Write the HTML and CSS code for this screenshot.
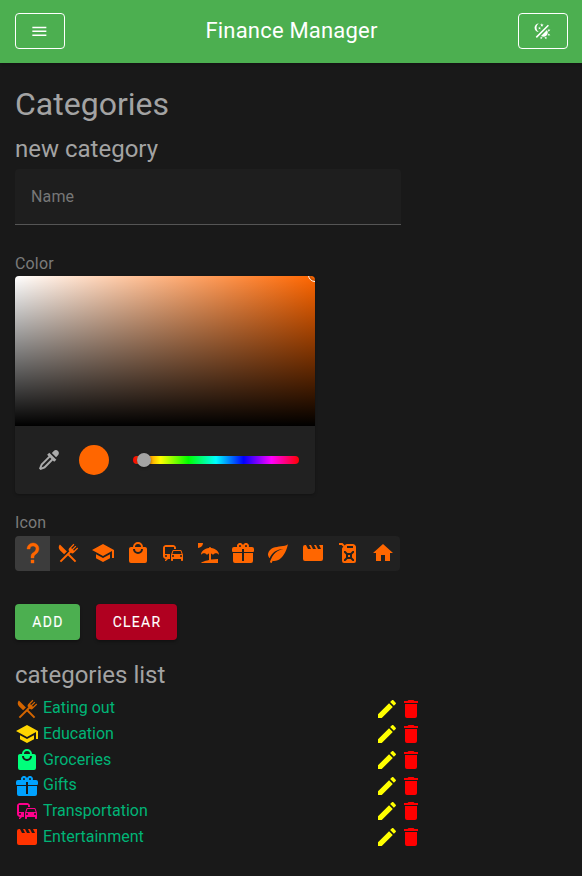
FILE: index.html
```html
<!DOCTYPE html>
<html lang="en">
<head>
<meta charset="utf-8">
<title>Finance Manager</title>
<link rel="stylesheet" href="styles.css">
</head>
<body>
<svg class="sprite" aria-hidden="true">
<symbol id="silverware" viewBox="0 0 24 24"><path d="M8.1,13.34L3.91,9.16C2.35,7.59 2.35,5.06 3.91,3.5L10.93,10.5L8.1,13.34M13.41,13L20.29,19.88L18.88,21.29L12,14.41L5.12,21.29L3.71,19.88L13.36,10.22L13.16,10C12.38,9.23 12.38,7.97 13.16,7.19L17.5,2.82L18.43,3.74L15.19,7L16.15,7.94L19.39,4.69L20.31,5.61L17.06,8.85L18,9.81L21.26,6.56L22.18,7.5L17.81,11.84C17.03,12.62 15.77,12.62 15,11.84L14.78,11.64L13.41,13Z"/></symbol>
<symbol id="school" viewBox="0 0 24 24"><path d="M12,3L1,9L12,15L21,10.09V17H23V9M5,13.18V17.18L12,21L19,17.18V13.18L12,17L5,13.18Z"/></symbol>
<symbol id="shopping" viewBox="0 0 24 24"><path d="M12,13A5,5 0 0,1 7,8H9A3,3 0 0,0 12,11A3,3 0 0,0 15,8H17A5,5 0 0,1 12,13M12,3A3,3 0 0,1 15,6H9A3,3 0 0,1 12,3M19,6H17A5,5 0 0,0 12,1A5,5 0 0,0 7,6H5C3.89,6 3,6.89 3,8V20A2,2 0 0,0 5,22H19A2,2 0 0,0 21,20V8C21,6.89 20.1,6 19,6Z"/></symbol>
<symbol id="commute" viewBox="0 0 24 24"><path fill-rule="evenodd" d="M12 4H5C3.34 4 2 5.34 2 7v8c0 1.66 1.34 3 3 3l-1 1v1h1l2-2h2v-5H4V6h9v2h2V7c0-1.66-1.34-3-3-3zM5 14a1 1 0 1 1 0 2 1 1 0 0 1 0-2zM20.57 9.66c-.14-.4-.52-.66-.97-.66h-7.19c-.46 0-.83.26-.98.66L10 13.77l.01 5.51c0 .38.31.72.69.72h.62c.38 0 .68-.38.68-.76V18h8v1.24c0 .38.31.76.69.76h.61c.38 0 .69-.34.69-.72l.01-1.37v-4.14l-1.43-4.11zM12.41 10h7.19l1.03 3h-9.25l1.03-3zM12 16a1 1 0 1 1 0-2 1 1 0 0 1 0 2zM20 16a1 1 0 1 1 0-2 1 1 0 0 1 0 2z"/></symbol>
<symbol id="beach" viewBox="0 0 24 24"><path d="M15,18.54C17.13,18.21 19.5,18 22,18V22H5C5,21.35 8.2,19.86 13,18.9V12.4C12.16,12.65 11.45,13.21 11,13.95C10.39,12.93 9.27,12.25 8,12.25C6.73,12.25 5.61,12.93 5,13.95C5.03,10.37 8.5,7.43 13,7.04V7A1,1 0 0,1 14,6A1,1 0 0,1 15,7V7.04C19.5,7.43 22.96,10.37 23,13.95C22.39,12.93 21.27,12.25 20,12.25C18.73,12.25 17.61,12.93 17,13.95C16.55,13.21 15.84,12.65 15,12.39V18.54M7,2A5,5 0 0,1 2,7V2H7Z"/></symbol>
<symbol id="gift" viewBox="0 0 24 24"><path d="M9.06,1.93C7.17,1.92 5.33,3.74 6.17,6H3A2,2 0 0,0 1,8V10A1,1 0 0,0 2,11H11V8H13V11H22A1,1 0 0,0 23,10V8A2,2 0 0,0 21,6H17.83C19,2.73 14.6,0.42 12.57,3.24L12,4L11.43,3.22C10.8,2.33 9.93,1.94 9.06,1.93M9,4C9.89,4 10.34,5.08 9.71,5.71C9.08,6.34 8,5.89 8,5A1,1 0 0,1 9,4M15,4C15.89,4 16.34,5.08 15.71,5.71C15.08,6.34 14,5.89 14,5A1,1 0 0,1 15,4M2,12V20A2,2 0 0,0 4,22H20A2,2 0 0,0 22,20V12H13V20H11V12H2Z"/></symbol>
<symbol id="movie" viewBox="0 0 24 24"><path d="M18,4L20,8H17L15,4H13L15,8H12L10,4H8L10,8H7L5,4H4A2,2 0 0,0 2,6V18A2,2 0 0,0 4,20H20A2,2 0 0,0 22,18V4H18Z"/></symbol>
<symbol id="pencil" viewBox="0 0 24 24"><path d="M20.71,7.04C21.1,6.65 21.1,6 20.71,5.63L18.37,3.29C18,2.9 17.35,2.9 16.96,3.29L15.12,5.12L18.87,8.87M3,17.25V21H6.75L17.81,9.93L14.06,6.18L3,17.25Z"/></symbol>
<symbol id="delete" viewBox="0 0 24 24"><path d="M19,4H15.5L14.5,3H9.5L8.5,4H5V6H19M6,19A2,2 0 0,0 8,21H16A2,2 0 0,0 18,19V7H6V19Z"/></symbol>
</svg>
<header class="bar">
<button class="outlined"><svg viewBox="0 0 24 24"><path d="M3,6H21V8H3V6M3,11H21V13H3V11M3,16H21V18H3V16Z"/></svg></button>
<div class="title">Finance Manager</div>
<button class="outlined"><svg viewBox="0 0 24 24"><path d="M7.5,2C5.71,3.15 4.5,5.18 4.5,7.5C4.5,9.82 5.71,11.85 7.53,13C4.46,13 2,10.54 2,7.5A5.5,5.5 0 0,1 7.5,2M19.07,3.5L20.5,4.93L4.93,20.5L3.5,19.07L19.07,3.5M12.89,5.93L11.41,5L9.97,6L10.39,4.3L9,3.24L10.75,3.12L11.33,1.47L12,3.1L13.73,3.13L12.38,4.26L12.89,5.93M9.59,9.54L8.43,8.81L7.31,9.59L7.65,8.27L6.56,7.44L7.92,7.35L8.37,6.06L8.88,7.33L10.24,7.36L9.19,8.23L9.59,9.54M19,13.5A5.5,5.5 0 0,1 13.5,19C12.28,19 11.15,18.6 10.24,17.93L17.93,10.24C18.6,11.15 19,12.28 19,13.5M14.6,20.08L17.37,18.93L17.13,22.28L14.6,20.08M18.93,17.38L20.08,14.61L22.28,17.15L18.93,17.38M20.08,12.42L18.94,9.64L22.28,9.88L20.08,12.42M9.63,18.93L12.4,20.08L9.87,22.27L9.63,18.93Z"/></svg></button>
</header>
<main>
<h1>Categories</h1>
<h2>new category</h2>
<div class="field">Name</div>
<div class="label color-label">Color</div>
<div class="picker">
<div class="canvas"><i class="dot"></i></div>
<div class="controls">
<svg class="dropper" viewBox="0 0 24 24"><path d="M19.35,11.72L17.22,13.85L15.81,12.43L8.1,20.14L3.5,22L2,20.5L3.86,15.9L11.57,8.19L10.15,6.78L12.28,4.65L19.35,11.72M16.76,3C17.93,1.83 19.83,1.83 21,3C22.17,4.17 22.17,6.07 21,7.24L19.08,9.16L14.84,4.92L16.76,3M5.56,17.03L4.5,19.5L6.97,18.44L14.4,11L13,9.6L5.56,17.03Z"/></svg>
<div class="swatch"></div>
<div class="hue"><i class="thumb"></i></div>
</div>
</div>
<div class="label icon-label">Icon</div>
<div class="icons">
<span class="selected"><svg viewBox="0 0 24 24"><path d="M10,19H13V22H10V19M12,2C17.35,2.22 19.68,7.62 16.5,11.67C15.67,12.67 14.33,13.33 13.67,14.17C13,15 13,16 13,17H10C10,15.33 10,13.92 10.67,12.92C11.33,11.92 12.67,11.33 13.5,10.67C15.92,8.43 15.32,5.26 12,5A3,3 0 0,0 9,8H6A6,6 0 0,1 12,2Z"/></svg></span>
<span><svg><use href="#silverware"/></svg></span>
<span><svg><use href="#school"/></svg></span>
<span><svg><use href="#shopping"/></svg></span>
<span><svg><use href="#commute"/></svg></span>
<span><svg><use href="#beach"/></svg></span>
<span><svg><use href="#gift"/></svg></span>
<span><svg viewBox="0 0 24 24"><path d="M17,8C8,10 5.9,16.17 3.82,21.34L5.71,22L6.66,19.7C7.14,19.87 7.64,20 8,20C19,20 22,3 22,3C21,5 14,5.25 9,6.25C4,7.25 2,11.5 2,13.5C2,15.5 3.75,17.25 3.75,17.25C7,8 17,8 17,8Z"/></svg></span>
<span><svg><use href="#movie"/></svg></span>
<span><svg viewBox="0 0 24 24"><path fill-rule="evenodd" d="M3,2H6C6.28,2 6.53,2.11 6.71,2.29L8.79,4.38L9.59,3.59C10,3.2 10.5,3 11,3H17C17.5,3 18,3.2 18.41,3.59L19.41,4.59C19.8,5 20,5.5 20,6V20A2,2 0 0,1 18,22H8A2,2 0 0,1 6,20V8C6,7.5 6.2,7 6.59,6.59L7.38,5.79L5.59,4H3V2M11,5V7H17V5H11M11.41,12L9.41,10H8V11.41L10,13.41V16.59L8,18.59V20H9.41L11.41,18H14.59L16.59,20H18V18.59L16,16.59V13.41L18,11.41V10H16.59L14.59,12H11.41M12,14H14V16H12V14Z"/></svg></span>
<span><svg viewBox="0 0 24 24"><path d="M10,20V14H14V20H19V12H22L12,3L2,12H5V20H10Z"/></svg></span>
</div>
<div class="actions"><button class="add">ADD</button><button class="clear">CLEAR</button></div>
<h2 class="list-title">categories list</h2>
<ul class="list">
<li><svg class="c-eating"><use href="#silverware"/></svg><span>Eating out</span><svg class="edit"><use href="#pencil"/></svg><svg class="del"><use href="#delete"/></svg></li>
<li><svg class="c-education"><use href="#school"/></svg><span>Education</span><svg class="edit"><use href="#pencil"/></svg><svg class="del"><use href="#delete"/></svg></li>
<li><svg class="c-groceries"><use href="#shopping"/></svg><span>Groceries</span><svg class="edit"><use href="#pencil"/></svg><svg class="del"><use href="#delete"/></svg></li>
<li><svg class="c-gifts"><use href="#gift"/></svg><span>Gifts</span><svg class="edit"><use href="#pencil"/></svg><svg class="del"><use href="#delete"/></svg></li>
<li><svg class="c-transport"><use href="#commute"/></svg><span>Transportation</span><svg class="edit"><use href="#pencil"/></svg><svg class="del"><use href="#delete"/></svg></li>
<li><svg class="c-fun"><use href="#movie"/></svg><span>Entertainment</span><svg class="edit"><use href="#pencil"/></svg><svg class="del"><use href="#delete"/></svg></li>
</ul>
</main>
</body>
</html>
```
FILE: styles.css
```css
* { box-sizing: border-box; }
body { margin: 0; height: 876px; overflow: hidden; background: #191919; color: #a3a3a3; font: 16px/24px Roboto, sans-serif; }
svg { width: 24px; height: 24px; fill: currentColor; flex: none; display: block; }
.sprite { display: none; }
button { font: 400 14px/36px Roboto, sans-serif; padding: 0; border: 0; border-radius: 4px; }
.bar { height: 63px; padding: 0 14px 1px 15px; background: #4caf50; color: #fff; display: flex; align-items: center; justify-content: space-between; box-shadow: 0 2px 4px rgba(0,0,0,.25); }
.outlined { width: 50px; height: 36px; border: 1px solid #fff; background: none; color: #fff; display: flex; align-items: center; justify-content: center; }
.outlined svg { width: 18.7px; height: 18.7px; margin-right: 1px; }
.title { font-size: 22px; line-height: 28px; padding-bottom: 1px; letter-spacing: .2px; }
main { padding: 21px 15px 0; }
h1, h2 { margin: 0; font-weight: 400; }
h1 { font-size: 32px; line-height: 40px; }
h2 { font-size: 24px; line-height: 32px; margin-top: 9px; }
.field { width: 386px; height: 56px; margin-top: 4px; padding: 16px; background: #1e1e1e; border-bottom: 1px solid #555; border-radius: 4px 4px 0 0; color: #777; letter-spacing: .15px; }
.label { color: #7b7b7b; letter-spacing: .15px; }
.color-label { margin-top: 27px; }
.picker { width: 300px; height: 218px; border-radius: 4px; background: #212121; overflow: hidden; box-shadow: 0 1px 3px rgba(0,0,0,.3); }
.canvas { position: relative; height: 150px; background: linear-gradient(transparent, #000), linear-gradient(90deg, #fff, #ff6600); }
.dot { position: absolute; left: 293px; top: -8px; width: 14px; height: 14px; border-radius: 50%; border: 1.5px solid #fff; box-shadow: inset 0 0 2px 1px rgba(0,0,0,.35); }
.controls { height: 68px; display: flex; align-items: center; padding: 0 16px 0 22px; }
.dropper { fill: #ababab; }
.swatch { width: 30px; height: 30px; margin-left: 18px; border-radius: 50%; background: #ff6600; }
.hue { position: relative; flex: 1; height: 8px; margin-left: 24px; border-radius: 4px; background: linear-gradient(90deg, red, #ff0 16.66%, #0f0 33.33%, #0ff 50%, #00f 66.66%, #f0f 83.33%, red); }
.thumb { position: absolute; left: 4px; top: -3px; width: 14px; height: 14px; border-radius: 50%; background: #a3a3a3; box-shadow: 0 1px 3px rgba(0,0,0,.4); }
.icon-label { margin-top: 17px; }
.icons { display: flex; width: 385px; height: 35px; margin-top: 1px; background: #212121; border-radius: 4px; overflow: hidden; color: #ff6600; }
.icons span { width: 35px; padding: 5px 5.5px; }
.icons .selected { background: #3c3c3c; }
.selected path { stroke: currentColor; stroke-width: .4px; }
.actions { display: flex; gap: 16px; margin-top: 33px; }
.actions button { height: 36px; padding-left: 1px; color: #fff; letter-spacing: 1.25px; -webkit-text-stroke: .1px #fff; box-shadow: 0 2px 3px rgba(0,0,0,.3); }
.actions .add { width: 65px; background: #4caf50; }
.actions .clear { width: 81px; background: #b00020; }
.list-title { margin-top: 19px; }
.list { list-style: none; margin: 5px 0 0; padding: 0; width: 409px; }
.list li { display: flex; align-items: center; height: 25.67px; }
.list span { flex: 1; margin-left: 4px; padding-bottom: 1.2px; color: #00b476; }
.edit { color: #ff0; }
.del { color: red; margin: 0 1px 0 0; }
.c-eating { color: #d46500; }
.c-education { color: #ffd600; }
.c-groceries { color: #00ff7b; }
.c-gifts { color: #00a2ff; }
.c-transport { color: #ff008c; }
.c-fun { color: #ff3300; }
```
